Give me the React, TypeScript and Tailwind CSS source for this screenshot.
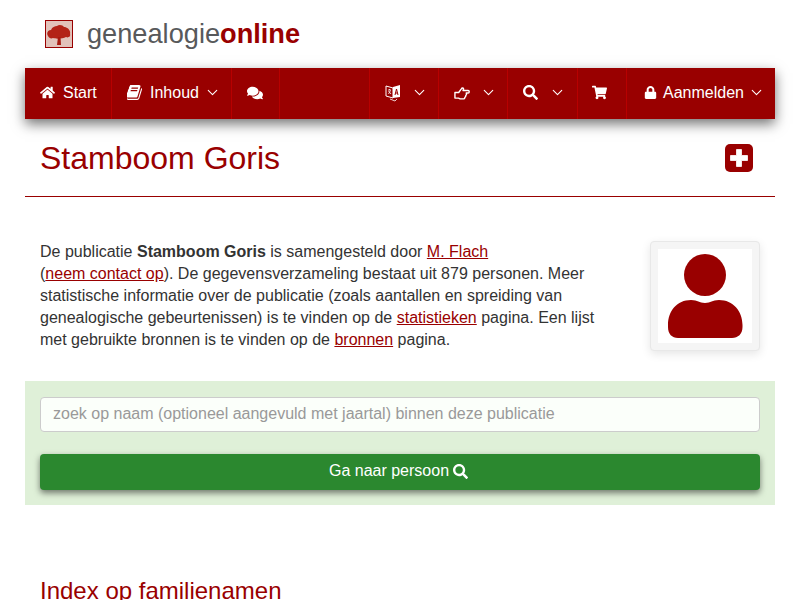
import { ChevronDown } from "lucide-react";
import { FaComments, FaHome, FaLock, FaSearch, FaShoppingCart } from "react-icons/fa";

const Chevron = () => <ChevronDown className="h-[17px] w-[17px] text-white" strokeWidth={1.5} />;

function BookIcon() {
  return (
    <svg viewBox="128 128 1536 1536" className="h-[15px] w-[15px]" fill="currentColor">
      <path d="M1639 478q40 57 18 129l-275 906q-19 64-76.5 107.5t-122.5 43.5h-923q-77 0-148.5-53.5t-99.5-131.5q-24-67-2-127 0-4 3-27t4-37q1-8-3-21.5t-3-19.5q2-11 8-21t16.5-23.5 16.5-23.5q23-38 45-91.5t30-91.5q3-10 .5-30t-.5-28q3-11 17-28t17-23q21-36 42-92t25-90q1-9-2.5-32t.5-28q4-13 22-30.5t22-22.5q19-26 42.5-84.5t27.5-96.5q1-8-3-25.5t-2-26.5q2-8 9-18t18-23 17-21q8-12 16.5-30.5t15-35 16-36 19.5-32 26.5-23.5 36-11.5 47.5 5.5l-1 3q38-9 51-9h761q74 0 114 56t18 130l-274 906q-36 119-71.5 153.5t-128.5 34.5h-869q-27 0-38 15-11 16-1 43 24 70 144 70h923q29 0 56-15.5t35-41.5l300-987q7-22 5-57 38 15 59 43zm-1064 2q-4 13 2 22.5t20 9.5h608q13 0 25.5-9.5t16.5-22.5l21-64q4-13-2-22.5t-20-9.5h-608q-13 0-25.5 9.5t-16.5 22.5zm-83 256q-4 13 2 22.5t20 9.5h608q13 0 25.5-9.5t16.5-22.5l21-64q4-13-2-22.5t-20-9.5h-608q-13 0-25.5 9.5t-16.5 22.5z" />
    </svg>
  );
}

function HandIcon() {
  return (
    <svg viewBox="0 0 17 14" className="h-[14px] w-4" fill="none" stroke="currentColor" strokeWidth="1.5" strokeLinejoin="round">
      <path d="M1 6.5 H5 L7.8 2.6 C8.4 1.2 10.2 1.3 10.2 2.8 L9.6 4.4 H15 C16.6 4.4 16.6 7 15 7 H13 C13.5 8 13.2 9.2 12.5 9.7 C12.6 10.6 12.2 11.3 11.5 11.6 C11.6 12.6 10.8 13.2 10 13.2 H6.5 L4.8 12.4 H1 Z" />
    </svg>
  );
}

function TranslateIcon() {
  return (
    <svg viewBox="0 0 16 18" className="h-[18px] w-4">
      <path d="M1 2 L8 4 V14 L1 12 Z" fill="none" stroke="#fff" strokeWidth="1" />
      <path d="M8 3 L15 1 V13 L8 14 Z" fill="#fff" />
      <path d="M10 11 L11.5 5 L13 11 M10.5 9 H12.5" fill="none" stroke="#990000" strokeWidth="1" />
      <path d="M3 6 H6 M4.5 5 V6 M3.5 10 L5.5 6.5 M3.5 7 L6 10" fill="none" stroke="#fff" strokeWidth="0.8" />
      <path d="M5 15 L10 17 L12 15" fill="none" stroke="#fff" strokeWidth="0.8" />
    </svg>
  );
}

function TreeLogo() {
  return (
    <div className="flex h-7 w-7 items-center justify-center border border-[#990000] bg-[#e2c2ba]">
      <svg viewBox="0 0 26 26" className="h-[26px] w-[26px] blur-[0.6px]">
        <path
          d="M2 15 C0 12 2 9 5 9 C6 6 9 5 11 5 C13 3 17 4 18 6 C21 6 25 9 24 13 C25 16 22 17 20 16 C17 18 9 18 7 17 C5 18 3 17 2 15 Z"
          fill="#b32317"
        />
        <path d="M12 16 H14.5 L15 24 H11 Z" fill="#a81c12" />
      </svg>
    </div>
  );
}

function NavItem({ children, className = "" }: { children?: React.ReactNode; className?: string }) {
  return (
    <div className={`flex h-full items-center border-r border-[#b80000] pb-[2px] ${className}`}>
      {children}
    </div>
  );
}

export default function App() {
  return (
    <div className="h-[600px] overflow-hidden bg-white px-[25px] font-['Liberation_Sans',Arial,sans-serif] text-base text-[#333333]">
      <header className="flex h-[68px] items-center pl-5">
        <TreeLogo />
        <div className="ml-[14px] text-[27.2px] leading-none text-[#58595b]">
          genealogie<span className="font-bold text-[#990000]">online</span>
        </div>
      </header>

      <nav className="flex h-[51px] items-center bg-[#990000] text-white shadow-[0_5px_12px_rgba(0,0,0,0.55)]">
        <NavItem className="w-[87px] gap-2 pl-[15px]">
          <FaHome className="h-[15px] w-[15px]" />
          <span>Start</span>
        </NavItem>
        <NavItem className="w-[120px] pl-[15px]">
          <BookIcon />
          <span className="ml-2">Inhoud</span>
          <span className="ml-[5px]"><Chevron /></span>
        </NavItem>
        <NavItem className="w-[48px] pl-[15px]">
          <FaComments className="h-4 w-4" />
        </NavItem>
        <NavItem className="w-[90px]" />
        <NavItem className="w-[69px] pl-[15px]">
          <TranslateIcon />
          <span className="ml-[10px]"><Chevron /></span>
        </NavItem>
        <NavItem className="w-[69px] pl-[15px]">
          <HandIcon />
          <span className="ml-[10px]"><Chevron /></span>
        </NavItem>
        <NavItem className="w-[70px] pl-[15px]">
          <FaSearch className="h-[15px] w-[15px]" />
          <span className="ml-[11px]"><Chevron /></span>
        </NavItem>
        <NavItem className="w-[49px] pl-[14px]">
          <FaShoppingCart className="h-[15px] w-[15px]" />
        </NavItem>
        <div className="flex h-full flex-1 items-center pb-[2px] pl-[17px]">
          <FaLock className="h-[13px] w-[13px]" />
          <span className="ml-[6px]">Aanmelden</span>
          <span className="ml-1"><Chevron /></span>
        </div>
      </nav>

      <div className="flex h-[78px] items-center justify-between border-b border-[#990000] pl-[15px] pr-[22px]">
        <h1 className="text-[32px] leading-none text-[#990000]">Stamboom Goris</h1>
        <svg viewBox="0 0 28 28" className="h-7 w-7">
          <rect x="0" y="0" width="28" height="28" rx="5" fill="#990000" />
          <path d="M11.5 5.5 H16.5 V11.5 H22.5 V16.5 H16.5 V22.5 H11.5 V16.5 H5.5 V11.5 H11.5 Z" fill="#fff" stroke="#fff" strokeLinejoin="round" strokeWidth="0.8" />
        </svg>
      </div>

      <section className="flex justify-between px-[15px] pt-[44px]">
        <p className="w-[570px] leading-[22px]">
          De publicatie <b>Stamboom Goris</b> is samengesteld door{" "}
          <a href="#" className="text-[#990000] underline">M. Flach</a>
          <br />(
          <a href="#" className="text-[#990000] underline">neem contact op</a>
          ). De gegevensverzameling bestaat uit 879 personen. Meer statistische informatie over de publicatie (zoals aantallen en spreiding van genealogische gebeurtenissen) is te vinden op de{" "}
          <a href="#" className="text-[#990000] underline">statistieken</a> pagina. Een lijst met gebruikte bronnen is te vinden op de{" "}
          <a href="#" className="text-[#990000] underline">bronnen</a> pagina.
        </p>
        <div className="h-[110px] w-[110px] rounded border border-[#e8e8e8] bg-[#f5f5f5] p-[7px] shadow-[0_3px_10px_rgba(0,0,0,0.1)]">
          <div className="flex h-[94px] w-[94px] items-center justify-center bg-white">
            <svg viewBox="0 0 94 94" className="h-[94px] w-[94px]">
              <circle cx="47" cy="26" r="21" fill="#990000" />
              <path
                d="M10 76 C10 62 19 51 33 51 C40 51 41 54 47 54 C53 54 54 51 61 51 C75 51 84.5 62 84.5 76 V78 C84.5 85 80 89 74 89 H20 C14 89 10 85 10 78 Z"
                fill="#990000"
              />
            </svg>
          </div>
        </div>
      </section>

      <section className="mt-[30px] h-[124px] bg-[#dff0d8] px-[15px] pt-4">
        <input
          readOnly
          placeholder="zoek op naam (optioneel aangevuld met jaartal) binnen deze publicatie"
          className="h-[35px] w-full rounded border border-[#cccccc] bg-[#fbfffa] px-3 pb-[2px] text-base text-[#555] outline-none placeholder:text-[#999999]"
        />
        <button className="mt-[22px] flex h-9 w-full items-center justify-center gap-1 rounded bg-[#2b882f] pb-[2px] pr-[3px] text-white shadow-[0_3px_6px_rgba(0,0,0,0.5)]">
          Ga naar persoon <FaSearch className="h-[15px] w-[15px]" />
        </button>
      </section>

      <h2 className="ml-[15px] mt-[74px] text-2xl leading-none text-[#990000]">Index op familienamen</h2>
    </div>
  );
}
